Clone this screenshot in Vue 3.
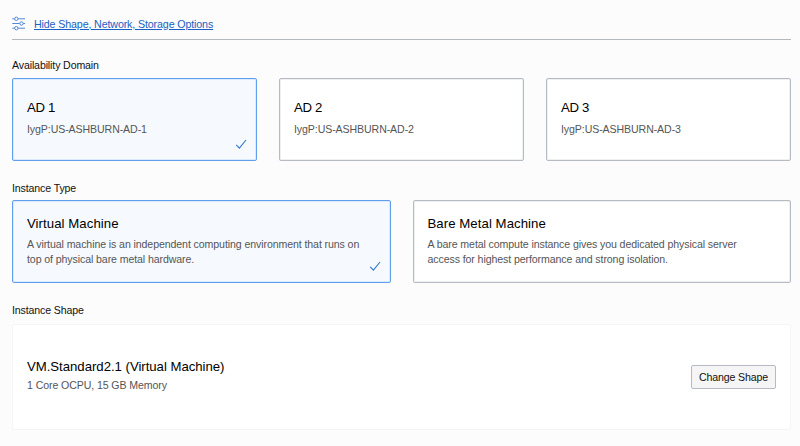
<script setup>
import { ref } from 'vue'

const domains = [
  { name: 'AD 1', id: 'IygP:US-ASHBURN-AD-1' },
  { name: 'AD 2', id: 'IygP:US-ASHBURN-AD-2' },
  { name: 'AD 3', id: 'IygP:US-ASHBURN-AD-3' },
]
const types = [
  {
    name: 'Virtual Machine',
    lines: ['A virtual machine is an independent computing environment that runs on', 'top of physical bare metal hardware.'],
  },
  {
    name: 'Bare Metal Machine',
    lines: ['A bare metal compute instance gives you dedicated physical server', 'access for highest performance and strong isolation.'],
  },
]
const domain = ref(0)
const type = ref(0)
</script>

<template>
  <main class="page">
    <header class="toggle">
      <svg class="sliders" width="14" height="15" viewBox="0 0 14 15" fill="none">
        <path d="M0.3 2.8H2.5M6.1 2.8H13M0.3 7.5H7.7M11.3 7.5H13M0.3 12.2H2.5M6.1 12.2H13" />
        <circle cx="4.3" cy="2.8" r="1.7" />
        <circle cx="9.5" cy="7.5" r="1.7" />
        <circle cx="4.3" cy="12.2" r="1.7" />
      </svg>
      <a class="link" href="#">Hide Shape, Network, Storage Options</a>
    </header>

    <h2 class="label first">Availability Domain</h2>
    <section class="cards">
      <div v-for="(d, i) in domains" :key="d.name" class="card domain" :class="{ selected: domain === i }" @click="domain = i">
        <h3 class="title">{{ d.name }}</h3>
        <p class="desc">{{ d.id }}</p>
        <svg v-if="domain === i" class="check" width="12" height="11" viewBox="0 0 12 11" fill="none">
          <path d="M1.2 5.8L4.4 9.2L11 1" />
        </svg>
      </div>
    </section>

    <h2 class="label">Instance Type</h2>
    <section class="cards">
      <div v-for="(t, i) in types" :key="t.name" class="card machine" :class="{ selected: type === i }" @click="type = i">
        <h3 class="title">{{ t.name }}</h3>
        <p class="desc"><span v-for="line in t.lines" :key="line" class="line">{{ line }}</span></p>
        <svg v-if="type === i" class="check" width="12" height="11" viewBox="0 0 12 11" fill="none">
          <path d="M1.2 5.8L4.4 9.2L11 1" />
        </svg>
      </div>
    </section>

    <h2 class="label last">Instance Shape</h2>
    <section class="shape">
      <div class="summary">
        <h3 class="title">VM.Standard2.1 (Virtual Machine)</h3>
        <p class="desc memory">1 Core OCPU, 15 GB Memory</p>
      </div>
      <button class="change" type="button">Change Shape</button>
    </section>
  </main>
</template>

<style>
body {
  background: #fcfcfc;
}
</style>

<style scoped>
.page {
  box-sizing: border-box;
  height: 446px;
  padding: 8px 9px 0 12px;
  font-family: "Liberation Sans", Arial, sans-serif;
  color: #111;
}
.toggle {
  box-sizing: border-box;
  height: 32px;
  display: flex;
  align-items: center;
  gap: 8px;
  border-bottom: 1px solid #b4b9be;
}
.sliders {
  stroke: #3f7cd2;
  stroke-width: 0.9;
}
.link {
  font-size: 10.7px;
  letter-spacing: -0.14px;
  line-height: 14px;
  color: #1a5fc4;
  text-decoration: underline;
}
.label {
  margin: 20px 0 5px;
  font-size: 10.6px;
  letter-spacing: -0.13px;
  line-height: 14px;
  font-weight: 400;
}
.label.first {
  margin: 18px 0 6px;
}
.label.last {
  margin-bottom: 7px;
}
.cards {
  display: flex;
  gap: 22px;
}
.card {
  position: relative;
  flex: 1 1 0;
  min-width: 0;
  box-sizing: border-box;
  height: 83px;
  padding: 0 14px;
  border: 1px solid #b6bbc3;
  border-radius: 2px;
  background: #fff;
  box-shadow: inset 0 0 0 1px #eff0f2;
}
.card.selected {
  border-color: #5f9fee;
  background: #f6faff;
  box-shadow: inset 0 0 0 1px #dceafd;
}
.domain {
  padding-top: 20px;
}
.domain .title {
  letter-spacing: -0.3px;
}
.machine {
  padding-top: 14px;
}
.title {
  margin: 0;
  font-size: 13.2px;
  line-height: 18px;
  font-weight: 400;
  color: #000;
}
.machine .title {
  letter-spacing: 0.06px;
}
.desc {
  margin: 5px 0 0;
  font-size: 10.6px;
  letter-spacing: -0.1px;
  line-height: 15px;
  color: #555;
}
.machine .desc {
  margin-top: 4px;
}
.desc.memory {
  margin-top: 2px;
}
.line {
  display: block;
  white-space: nowrap;
}
.check {
  position: absolute;
  right: 9px;
  bottom: 10px;
  stroke: #3478cf;
  stroke-width: 1.1;
}
.shape {
  box-sizing: border-box;
  height: 106px;
  display: flex;
  align-items: center;
  justify-content: space-between;
  padding: 0 14px;
  border: 1px solid #f5f5f5;
  border-radius: 2px;
  background: #fff;
}
.summary {
  padding-bottom: 3px;
}
.summary .title {
  letter-spacing: -0.03px;
}
.change {
  width: 85px;
  height: 24px;
  padding: 0;
  border: 1px solid #b6bbc3;
  border-radius: 2px;
  background: #f5f5f5;
  font-family: inherit;
  font-size: 10.6px;
  letter-spacing: -0.12px;
  color: #111;
}
</style>
